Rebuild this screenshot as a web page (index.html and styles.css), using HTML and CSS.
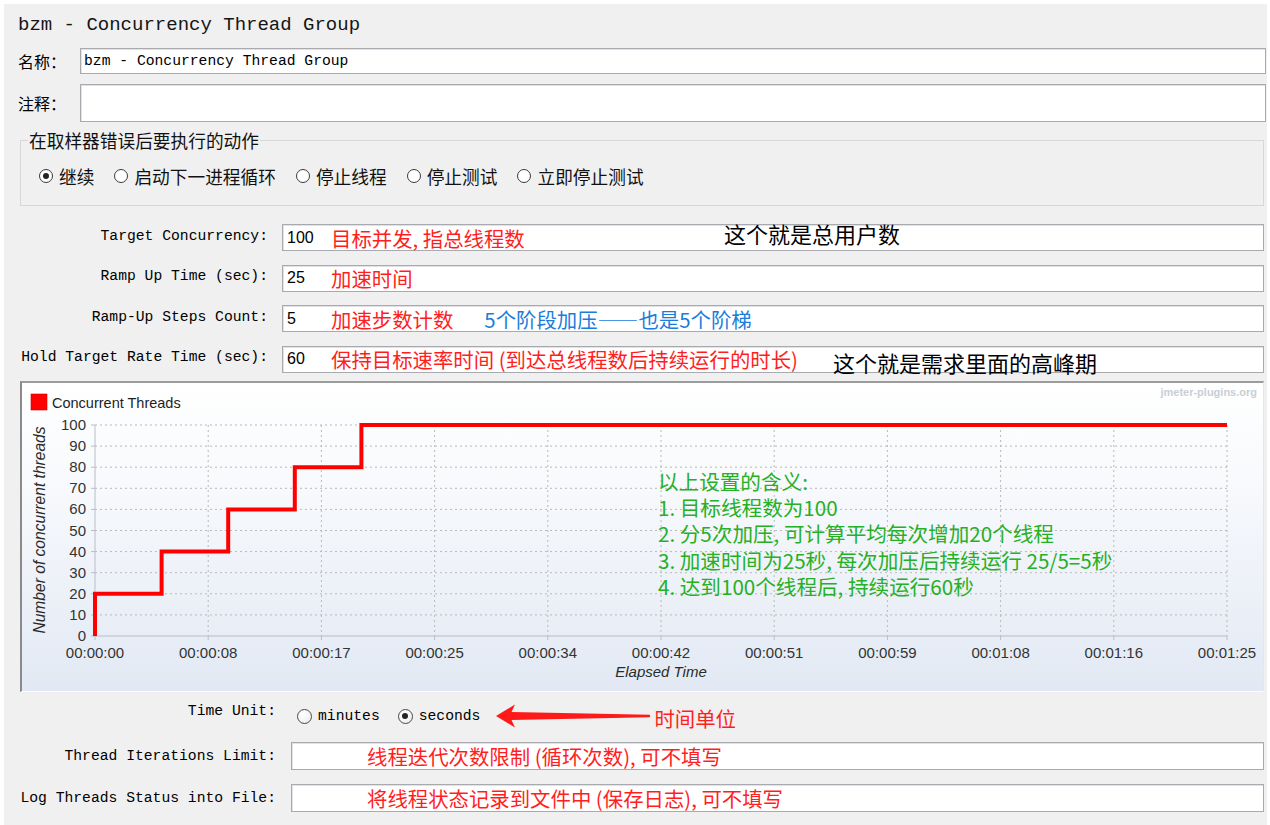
FILE: index.html
```html
<!DOCTYPE html>
<html lang="zh-CN">
<head>
<meta charset="utf-8">
<title>bzm - Concurrency Thread Group</title>
<link rel="stylesheet" href="styles.css">
</head>
<body>
<div class="app">
  <div class="title">bzm - Concurrency Thread Group</div>

  <div class="line name-line">
    <span class="cn-label">名称：</span>
    <div class="box name-box">bzm - Concurrency Thread Group</div>
  </div>
  <div class="line comment-line">
    <span class="cn-label">注释：</span>
    <div class="box"></div>
  </div>

  <fieldset class="actions">
    <legend>在取样器错误后要执行的动作</legend>
    <div class="radios">
      <span class="radio"><span class="dot on"></span>继续</span>
      <span class="radio"><span class="dot"></span>启动下一进程循环</span>
      <span class="radio"><span class="dot"></span>停止线程</span>
      <span class="radio"><span class="dot"></span>停止测试</span>
      <span class="radio"><span class="dot"></span>立即停止测试</span>
    </div>
  </fieldset>

  <div class="params">
    <div class="prow">
      <span class="plabel">Target Concurrency:</span>
      <div class="box pbox"><span class="val">100</span><span class="note red w1">目标并发, 指总线程数</span><span class="note black up">这个就是总用户数</span></div>
    </div>
    <div class="prow">
      <span class="plabel">Ramp Up Time (sec):</span>
      <div class="box pbox"><span class="val">25</span><span class="note red">加速时间</span></div>
    </div>
    <div class="prow">
      <span class="plabel">Ramp-Up Steps Count:</span>
      <div class="box pbox"><span class="val">5</span><span class="note red">加速步数计数</span><span class="note blue gap31">5个阶段加压——也是5个阶梯</span></div>
    </div>
    <div class="prow">
      <span class="plabel">Hold Target Rate Time (sec):</span>
      <div class="box pbox"><span class="val">60</span><span class="note red">保持目标速率时间 (到达总线程数后持续运行的时长)</span><span class="note black gap37">这个就是需求里面的高峰期</span></div>
    </div>
  </div>

  <div class="chart">
    <svg class="plot" width="1241" height="308" viewBox="0 0 1241 308" xmlns="http://www.w3.org/2000/svg">
      <rect x="9" y="11" width="16" height="16" fill="#ff0000" stroke="#d00000" stroke-width="0.6"/>
      <text x="30" y="25" class="legend-text">Concurrent Threads</text>
      <text x="1235" y="13" class="brand" text-anchor="end">jmeter-plugins.org</text>

      <path class="grid" d="M73 231.9H1205M73 210.8H1205M73 189.7H1205M73 168.6H1205M73 147.5H1205M73 126.4H1205M73 105.3H1205M73 84.2H1205M73 63.1H1205M73 42H1205"/>
      <path class="grid" d="M186.2 42V253M299.4 42V253M412.6 42V253M525.8 42V253M639 42V253M752.2 42V253M865.4 42V253M978.6 42V253M1091.8 42V253M1205 42V253"/>

      <path class="axis" d="M73 42V253H1205"/>
      <path class="axis" d="M69 253H73M69 231.9H73M69 210.8H73M69 189.7H73M69 168.6H73M69 147.5H73M69 126.4H73M69 105.3H73M69 84.2H73M69 63.1H73M69 42H73"/>
      <path class="axis" d="M73 253V257M186.2 253V257M299.4 253V257M412.6 253V257M525.8 253V257M639 253V257M752.2 253V257M865.4 253V257M978.6 253V257M1091.8 253V257M1205 253V257"/>

      <g class="ylab" text-anchor="end">
        <text x="64" y="258">0</text>
        <text x="64" y="236.9">10</text>
        <text x="64" y="215.8">20</text>
        <text x="64" y="194.7">30</text>
        <text x="64" y="173.6">40</text>
        <text x="64" y="152.5">50</text>
        <text x="64" y="131.4">60</text>
        <text x="64" y="110.3">70</text>
        <text x="64" y="89.2">80</text>
        <text x="64" y="68.1">90</text>
        <text x="64" y="47">100</text>
      </g>
      <g class="xlab" text-anchor="middle">
        <text x="73" y="274.5">00:00:00</text>
        <text x="186.2" y="274.5">00:00:08</text>
        <text x="299.4" y="274.5">00:00:17</text>
        <text x="412.6" y="274.5">00:00:25</text>
        <text x="525.8" y="274.5">00:00:34</text>
        <text x="639" y="274.5">00:00:42</text>
        <text x="752.2" y="274.5">00:00:51</text>
        <text x="865.4" y="274.5">00:00:59</text>
        <text x="978.6" y="274.5">00:01:08</text>
        <text x="1091.8" y="274.5">00:01:16</text>
        <text x="1205" y="274.5">00:01:25</text>
      </g>
      <text class="axis-title" x="639" y="294" text-anchor="middle">Elapsed Time</text>
      <text class="axis-title ytitle" transform="translate(23 147) rotate(-90)" text-anchor="middle">Number of concurrent threads</text>

      <polyline class="series" points="73,253 73,210.8 139.6,210.8 139.6,168.6 206.2,168.6 206.2,126.4 272.8,126.4 272.8,84.2 339.4,84.2 339.4,42 1205,42"/>
    </svg>
    <div class="explain">
      <div>以上设置的含义:</div>
      <div>1. 目标线程数为100</div>
      <div>2. 分5次加压, 可计算平均每次增加20个线程</div>
      <div>3. 加速时间为25秒, 每次加压后持续运行 25/5=5秒</div>
      <div>4. 达到100个线程后, 持续运行60秒</div>
    </div>
  </div>

  <div class="bottom">
    <div class="brow unit-row">
      <span class="blabel">Time Unit:</span>
      <div class="units">
        <span class="uradio"><span class="udot"></span>minutes</span>
        <span class="uradio"><span class="udot on"></span>seconds</span>
        <svg class="arrow" width="155" height="26" viewBox="0 0 155 26" xmlns="http://www.w3.org/2000/svg">
          <path d="M0 13 L19 1.5 L15.5 9 L154 11.8 L154 14.2 L15.5 17 L19 24.5 Z" fill="#ff1a1a"/>
        </svg>
        <span class="note red unit-note">时间单位</span>
      </div>
    </div>
    <div class="brow field-row first">
      <span class="blabel">Thread Iterations Limit:</span>
      <div class="box fbox"><span class="note red">线程迭代次数限制 (循环次数), 可不填写</span></div>
    </div>
    <div class="brow field-row">
      <span class="blabel">Log Threads Status into File:</span>
      <div class="box fbox"><span class="note red">将线程状态记录到文件中 (保存日志), 可不填写</span></div>
    </div>
  </div>
</div>
</body>
</html>
```

FILE: styles.css
```css
* { box-sizing: border-box; }

html, body { margin: 0; padding: 0; background: #ffffff; }

.app {
  margin: 4px 3px 0 4px;
  height: 821px;
  padding: 0 3px 0 14px;
  background: #f0f0f0;
  font-family: "Noto Sans CJK SC", "Noto Sans", sans-serif;
  color: #000;
  overflow: hidden;
}

.title {
  font-family: "Liberation Mono", monospace;
  font-size: 19px;
  line-height: 28px;
  padding: 7px 0 9px;
  color: #151515;
  white-space: nowrap;
}

.line {
  display: flex;
  align-items: center;
  margin-right: -2px;
}
.name-line { height: 26px; }
.comment-line { height: 38px; margin-top: 10px; }

.cn-label {
  flex: none;
  width: 62px;
  font-size: 16px;
  line-height: 20px;
}

.box {
  flex: 1;
  height: 100%;
  display: flex;
  align-items: center;
  background: #ffffff;
  border: 1px solid #a9a9b0;
  box-shadow: inset 1px 1px 0 #e2e2e6;
  white-space: nowrap;
  min-width: 0;
}

.name-box {
  font-family: "Liberation Mono", monospace;
  font-size: 14.7px;
  padding-left: 3px;
}

.actions {
  margin: 9px 0 0 2px;
  padding: 0 0 18px;
  border: 1px solid #d7d7d7;
  min-width: 0;
}
.actions legend {
  margin-left: 7px;
  padding: 0 1px;
  font-size: 17.7px;
  line-height: 18px;
  color: #111;
}

.radios {
  display: flex;
  gap: 20px;
  height: 38px;
  padding: 17px 0 0 18px;
}
.radio {
  display: flex;
  align-items: center;
  gap: 6px;
  height: 20px;
  font-size: 17.7px;
  line-height: 20px;
  color: #111;
  white-space: nowrap;
}
.dot {
  position: relative;
  flex: none;
  width: 14px;
  height: 14px;
  border: 1px solid #3a3a3a;
  border-radius: 50%;
  background: #ffffff;
}
.dot.on::after {
  content: "";
  position: absolute;
  inset: 3px;
  border-radius: 50%;
  background: #222;
}

.params {
  margin-top: 18px;
  display: flex;
  flex-direction: column;
  gap: 13.5px;
}
.prow {
  display: flex;
  align-items: center;
  height: 27px;
  gap: 14px;
}
.plabel {
  flex: none;
  width: 250px;
  text-align: right;
  font-family: "Liberation Mono", monospace;
  font-size: 14.7px;
  line-height: 16px;
  padding-bottom: 4px;
  white-space: nowrap;
}
.pbox { padding-left: 4px; overflow: visible; }
.val {
  flex: none;
  width: 44px;
  font-family: "Liberation Sans", sans-serif;
  font-size: 16px;
}

.note {
  flex: none;
  font-size: 20.4px;
  line-height: 22px;
  white-space: nowrap;
}
.red { color: #ff1e1e; }
.blue { color: #1b7ddb; }
.black { color: #000; font-size: 22px; line-height: 24px; }
.up { margin-bottom: 10px; }
.w1 { width: 393px; }
.gap31 { margin-left: 31px; }
.gap37 { margin-left: 35px; margin-top: 6px; }

.chart {
  position: relative;
  margin: 8.5px 0 0 2px;
  height: 311px;
  border-top: 2px solid #9c9c9c;
  border-left: 2px solid #8a8a8a;
  border-right: 1px solid #e6e6e6;
  border-bottom: 1px solid #fbfbfb;
  background: linear-gradient(#ffffff 0%, #f7f9fc 35%, #e2e9f4 100%);
}
.plot { display: block; }
.plot text { font-family: "Liberation Sans", Arial, sans-serif; }
.legend-text { font-size: 14.5px; fill: #1e1e1e; }
.brand { font-size: 11px; font-weight: bold; fill: #c9ced6; }
.grid { fill: none; stroke: #b9b9b9; stroke-width: 1; stroke-dasharray: 2 3; }
.axis { fill: none; stroke: #b8bec8; stroke-width: 1; }
.ylab text, .xlab text { font-size: 15px; fill: #333; }
.axis-title { font-size: 15px; font-style: italic; fill: #2a2a2a; }
.ytitle { font-size: 15.6px; }
.series { fill: none; stroke: #ff0000; stroke-width: 4; stroke-linejoin: miter; }

.explain {
  position: absolute;
  left: 636px;
  top: 85px;
  color: #25b025;
  font-size: 20.6px;
  line-height: 26.2px;
  white-space: nowrap;
}

.bottom { margin-top: 13px; }
.brow { display: flex; align-items: center; }
.blabel {
  flex: none;
  width: 258px;
  text-align: right;
  font-family: "Liberation Mono", monospace;
  font-size: 14.7px;
  line-height: 16px;
  white-space: nowrap;
}
.unit-row { height: 22px; gap: 21px; }
.unit-row .blabel { padding-bottom: 10px; }
.units { display: flex; align-items: center; }
.uradio {
  display: flex;
  align-items: center;
  gap: 6px;
  font-family: "Liberation Mono", monospace;
  font-size: 14.7px;
  line-height: 16px;
}
.uradio + .uradio { margin-left: 18px; }
.udot {
  position: relative;
  flex: none;
  width: 15px;
  height: 15px;
  border: 1px solid #4a4a4a;
  border-radius: 50%;
  background: radial-gradient(circle at 40% 35%, #ffffff, #e9e9e9);
}
.udot.on::after {
  content: "";
  position: absolute;
  inset: 3.5px;
  border-radius: 50%;
  background: #222;
}
.arrow { display: block; margin-left: 16px; flex: none; }
.unit-note { margin-left: 3px; margin-top: 4px; }

.field-row { height: 28px; gap: 15px; margin-top: 14px; }
.field-row.first { margin-top: 15px; }
.fbox { padding-left: 75px; }
```
